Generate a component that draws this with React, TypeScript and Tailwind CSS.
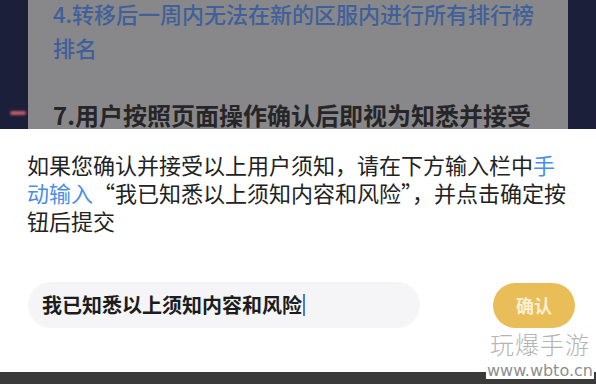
export default function App() {
  return (
    <div
      className="relative w-[596px] h-[384px] overflow-hidden flex flex-col bg-[#1c1f3a]"
      style={{ fontFamily: '"Noto Sans CJK SC", "Noto Sans", sans-serif' }}
    >
      {/* dimmed notice behind the sheet */}
      <div className="h-[129px] flex shrink-0">
        <div className="w-[28px] bg-[#1c1f3a] relative">
          <div className="absolute left-[10px] top-[111px] w-[16px] h-[4px] rounded-full bg-[#c25a6a] blur-[1px]" />
        </div>
        <div className="flex-1 bg-[#88888a] pl-[25px] overflow-hidden">
          <p className="mt-[-4px] text-[22px] leading-[34px] font-medium text-[#3f609a]">
            4.转移后一周内无法在新的区服内进行所有排行榜
            <br />
            排名
          </p>
          <p className="mt-[34px] text-[24px] leading-[34px] font-bold text-[#262628] whitespace-nowrap">
            7.用户按照页面操作确认后即视为知悉并接受
          </p>
        </div>
        <div className="w-[28px] bg-[#1c1f3a]" />
      </div>

      {/* bottom sheet */}
      <div className="h-[243px] shrink-0 bg-white pt-[21px] pl-[27px] pr-[21px]">
        <p className="w-[542px] text-[22px] leading-[28px] text-[#222]">
          如果您确认并接受以上用户须知，请在下方输入栏中
          <span className="text-[#4a8ee6]">手动输入</span>
          “我已知悉以上须知内容和风险”，并点击确定按钮后提交
        </p>
        <div className="mt-[48px] flex items-center justify-between">
          <div className="ml-[1px] w-[392px] h-[46px] rounded-full bg-[#f5f5f7] flex items-center pl-[14px]">
            <span className="text-[20px] font-semibold text-[#1c1c1c] leading-none">
              我已知悉以上须知内容和风险
            </span>
            <span className="ml-[1px] w-[2px] h-[22px] bg-[#3d7fe0]" />
          </div>
          <button className="w-[82px] h-[45px] rounded-full bg-[#e9be58] text-[18px] font-bold text-[#fbf0d4]">
            确认
          </button>
        </div>
      </div>

      <div className="flex-1 bg-[#3a3a3a]" />

      {/* watermark */}
      <div className="absolute left-[486px] top-[330px] flex flex-col items-center">
        <span className="text-[24px] leading-[28px] text-[#b4b4b4] font-light tracking-[1px]">
          玩爆手游
        </span>
        <span
          className="mt-[4px] px-[1px] bg-white text-[16px] leading-[17px] text-[#8e8e8e]"
          style={{ fontFamily: '"DejaVu Sans", sans-serif' }}
        >
          www.wbto.cn
        </span>
      </div>
    </div>
  );
}
